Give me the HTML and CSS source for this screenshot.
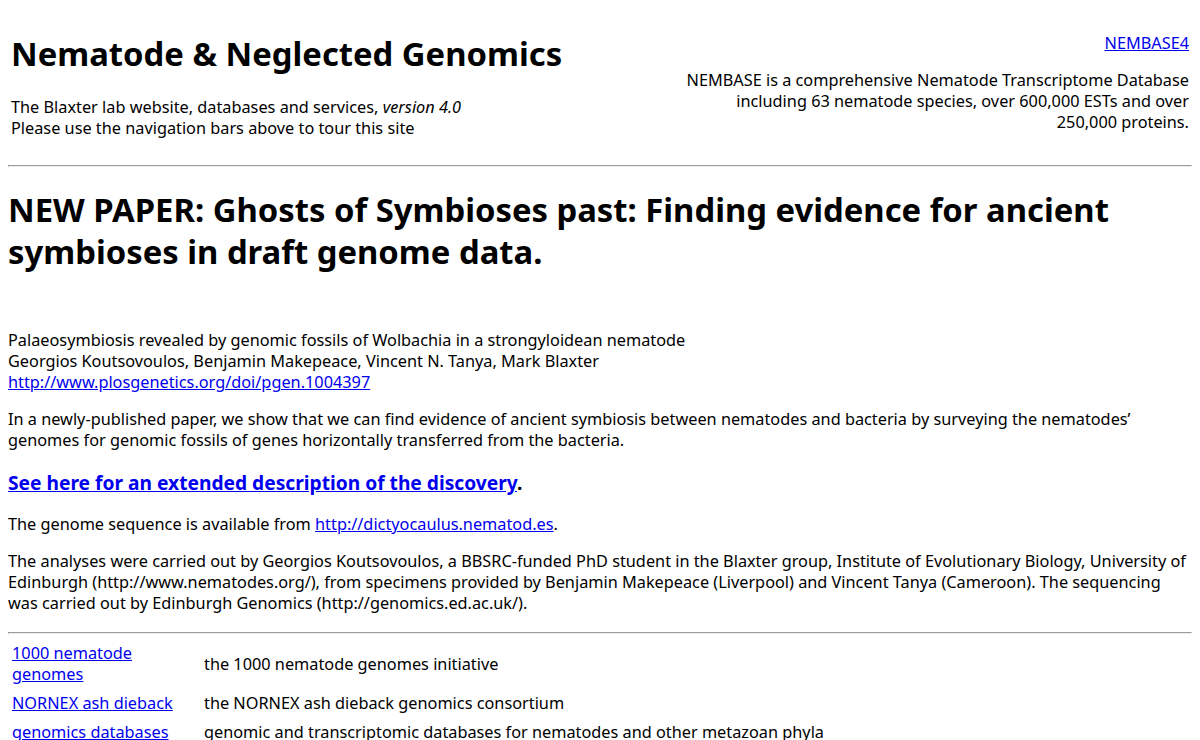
FILE: index.html
```html
<!DOCTYPE html>
<html>
<head>
<meta charset="utf-8">
<title>Nematode &amp; Neglected Genomics</title>
<link rel="stylesheet" href="styles.css">
</head>
<body>
<table class="masthead">
  <tr>
    <td class="mast-left">
      <h1 class="site-title">Nematode &amp; Neglected Genomics</h1>
      <p class="tagline">The Blaxter lab website, databases and services, <em>version 4.0</em><br>Please use the navigation bars above to tour this site</p>
    </td>
    <td class="mast-right">
      <p class="feature-link"><a href="#">NEMBASE4</a></p>
      <p class="feature-text">NEMBASE is a comprehensive Nematode Transcriptome Database including 63 nematode species, over 600,000 ESTs and over 250,000 proteins.</p>
    </td>
  </tr>
</table>
<hr class="rule-top">
<h1 class="news-title">NEW PAPER: Ghosts of Symbioses past: Finding evidence for ancient symbioses in draft genome data.</h1>
<p class="citation">Palaeosymbiosis revealed by genomic fossils of Wolbachia in a strongyloidean nematode<br>Georgios Koutsovoulos, Benjamin Makepeace, Vincent N. Tanya, Mark Blaxter<br><a href="#">http://www.plosgenetics.org/doi/pgen.1004397</a></p>
<p class="text">In a newly-published paper, we show that we can find evidence of ancient symbiosis between nematodes and bacteria by surveying the nematodes’ genomes for genomic fossils of genes horizontally transferred from the bacteria.</p>
<h3 class="more"><a href="#">See here for an extended description of the discovery</a>.</h3>
<p class="text">The genome sequence is available from <a href="#">http://dictyocaulus.nematod.es</a>.</p>
<p class="text">The analyses were carried out by Georgios Koutsovoulos, a BBSRC-funded PhD student in the Blaxter group, Institute of Evolutionary Biology, University of Edinburgh (http://www.nematodes.org/), from specimens provided by Benjamin Makepeace (Liverpool) and Vincent Tanya (Cameroon). The sequencing was carried out by Edinburgh Genomics (http://genomics.ed.ac.uk/).</p>
<hr class="rule-bottom">
<table class="links">
  <tr><td class="link-cell"><a href="#">1000 nematode genomes</a></td><td class="desc-cell">the 1000 nematode genomes initiative</td></tr>
  <tr><td class="link-cell"><a href="#">NORNEX ash dieback</a></td><td class="desc-cell">the NORNEX ash dieback genomics consortium</td></tr>
  <tr><td class="link-cell"><a href="#">genomics databases</a></td><td class="desc-cell">genomic and transcriptomic databases for nematodes and other metazoan phyla</td></tr>
</table>
</body>
</html>
```
FILE: styles.css
```css
html, body {
  background: #ffffff;
  color: #000000;
}
body {
  margin: 8px;
  font-family: "Noto Sans", "Open Sans", sans-serif;
  font-size: 16.3px;
  line-height: 21px;
}
a {
  color: #0000ee;
  text-decoration: underline;
}
.masthead {
  width: 100%;
  border-collapse: separate;
  border-spacing: 2px;
}
.masthead td {
  padding: 1px;
  vertical-align: middle;
}
.mast-left {
  text-align: left;
}
.mast-right {
  width: 512px;
  text-align: right;
}
.site-title {
  font-size: 32.8px;
  line-height: 42px;
  font-weight: bold;
  margin: 22px 0 22px 0;
}
.tagline {
  margin: 0 0 16px 0;
}
.feature-link {
  margin: 16px 0;
}
.feature-text {
  margin: 16px 0;
}
.rule-top {
  margin: 7px 0 0 0;
}
.news-title {
  font-size: 32.8px;
  line-height: 42px;
  font-weight: bold;
  margin: 22px 0 22px 0;
}
.citation {
  margin: 57px 0 16px 0;
}
.text {
  margin: 16px 0;
}
.more {
  font-size: 19.2px;
  line-height: 25px;
  font-weight: bold;
  margin: 19px 0;
}
.rule-bottom {
  margin: 18px 0 4px 0;
}
.links {
  border-collapse: separate;
  border-spacing: 2px;
}
.links td {
  padding: 3px 2px;
  vertical-align: middle;
}
.link-cell {
  width: 186px;
}
```
